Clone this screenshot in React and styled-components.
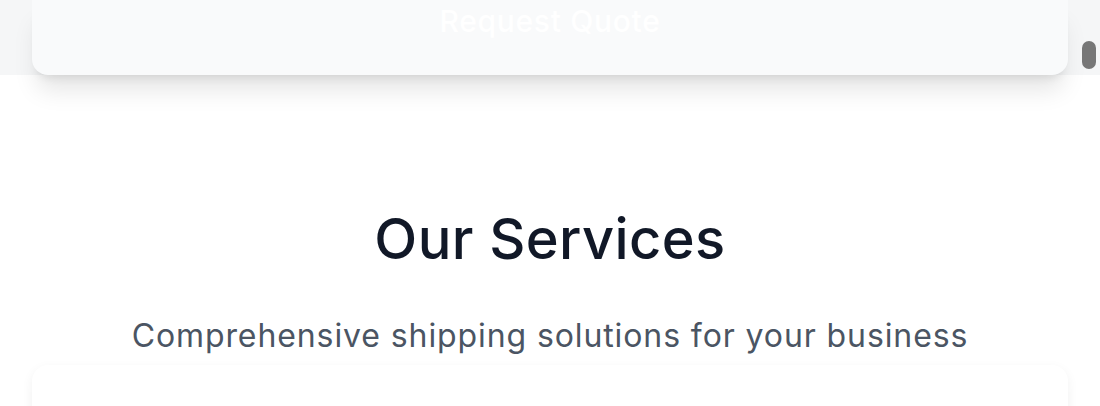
import styled, { createGlobalStyle } from 'styled-components'

const GlobalStyle = createGlobalStyle`
  html, body {
    margin: 0;
    padding: 0;
    background: #ffffff;
    font-family: Inter, "Open Sans", sans-serif;
    overflow: hidden;
  }
`

const App = () => {
    return (
        <Page>
            <GlobalStyle />
            <Hero>
                <QuoteCard>
                    <QuoteButton>Request Quote</QuoteButton>
                </QuoteCard>
            </Hero>
            <Services>
                <Title>Our Services</Title>
                <Subtitle>Comprehensive shipping solutions for your business</Subtitle>
                <ServiceCard />
            </Services>
            <ScrollThumb />
        </Page>
    )
}

export default App

const Page = styled.div`
position: relative;
width: 1100px;
height: 406px;
overflow: hidden;
`
const Hero = styled.section`
background: #f5f6f7;
padding: 0 32px;
`
const QuoteCard = styled.div`
height: 75px;
background: #f9fafb;
border-radius: 0 0 16px 16px;
box-shadow: 0 20px 25px -5px rgba(0, 0, 0, 0.1), 0 8px 10px -6px rgba(0, 0, 0, 0.1);
display: flex;
justify-content: center;
align-items: flex-start;
position: relative;
z-index: 1;
`
const QuoteButton = styled.button`
border: none;
background: transparent;
color: #ffffff;
font-family: Inter, sans-serif;
font-size: 30px;
font-weight: 500;
letter-spacing: 0.7px;
line-height: 40px;
padding: 0;
margin-top: 1px;
`
const Services = styled.section`
padding: 131px 32px 0;
display: flex;
flex-direction: column;
align-items: center;
`
const Title = styled.h2`
margin: 0;
font-size: 56px;
line-height: 67px;
font-weight: 500;
letter-spacing: 0.4px;
color: #111827;
`
const Subtitle = styled.p`
margin: 39px 0 0;
font-size: 32px;
line-height: 48px;
font-weight: 400;
letter-spacing: 0.9px;
color: #4b5563;
`
const ServiceCard = styled.div`
align-self: stretch;
height: 120px;
margin-top: 5px;
background: #ffffff;
border-radius: 16px;
box-shadow: 0 4px 12px rgba(0, 0, 0, 0.06);
`
const ScrollThumb = styled.div`
position: absolute;
top: 41px;
right: 4px;
width: 14px;
height: 28px;
border-radius: 7px;
background: #777777;
z-index: 2;
`
